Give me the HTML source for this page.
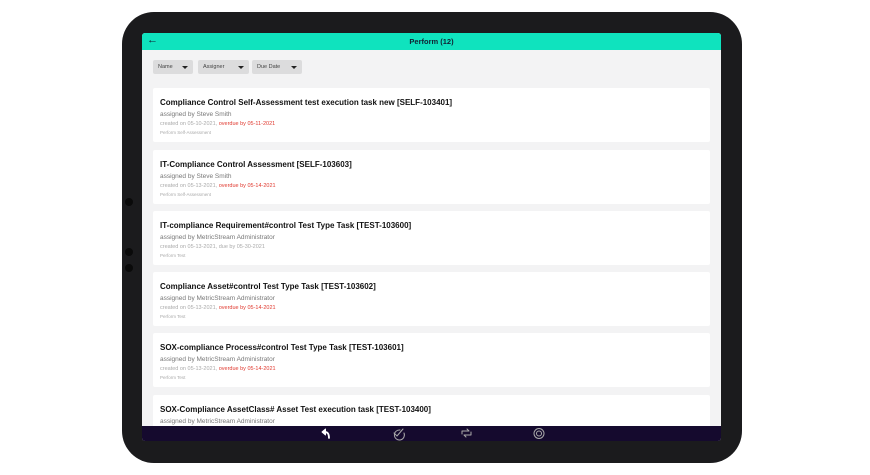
<!DOCTYPE html>
<html><head><style>
*{margin:0;padding:0;box-sizing:border-box}
body{width:870px;height:475px;background:#fff;position:relative;overflow:hidden;font-family:"Liberation Sans",sans-serif}
.dev{position:absolute;left:122px;top:12px;width:620px;height:451px;background:#1b1b1d;border-radius:32px}
.scr{position:absolute;left:142px;top:33px;width:579px;height:408px;background:#f3f3f4;overflow:hidden;border-radius:3px}
.hdr{height:17px;background:#0fe3be;text-align:center;font-size:7.5px;font-weight:bold;line-height:17px;color:#123}
.hdr .b{position:absolute;left:5px;top:-1px;font-size:11px;font-weight:bold}
.f{position:absolute;top:27px;height:14px;background:#dcdcdd;border-radius:2px;font-size:5.5px;line-height:14px;padding-left:5px;color:#444}
.f:after{content:"";position:absolute;right:5px;top:5.5px;border:3px solid transparent;border-top:3.5px solid #222}
.c{position:absolute;left:11px;width:557px;height:54px;background:#fff;border-radius:2px}
.t{position:absolute;left:7px;top:10px;font-size:8px;font-weight:bold;color:#111;white-space:nowrap}
.a{position:absolute;left:7px;top:23px;font-size:6.5px;color:#777}
.d{position:absolute;left:7px;top:33px;font-size:5.5px;color:#aaa}
.d span{color:#e0392f}
.p{position:absolute;left:7px;top:42px;font-size:4.5px;color:#aaa}
.bar{position:absolute;left:0;bottom:0;width:579px;height:15px;background:#150a2e}
.dot{position:absolute;left:125px;width:8px;height:8px;border-radius:50%;background:#0a0a0a}
</style></head><body>
<div class="dev"></div>
<div class="dot" style="top:198px"></div><div class="dot" style="top:248px"></div><div class="dot" style="top:264px"></div>
<div class="scr">
<div class="hdr"><span class="b">←</span>Perform (12)</div>
<div class="f" style="left:11px;width:40px">Name</div>
<div class="f" style="left:56px;width:51px">Assigner</div>
<div class="f" style="left:110px;width:50px">Due Date</div>
<div class="c" style="top:55px"><div class="t">Compliance Control Self-Assessment test execution task new [SELF-103401]</div><div class="a">assigned by Steve Smith</div><div class="d">created on 05-10-2021, <span>overdue by 05-11-2021</span></div><div class="p">Perform Self-Assessment</div></div>
<div class="c" style="top:117px"><div class="t">IT-Compliance Control Assessment [SELF-103603]</div><div class="a">assigned by Steve Smith</div><div class="d">created on 05-13-2021, <span>overdue by 05-14-2021</span></div><div class="p">Perform Self-Assessment</div></div>
<div class="c" style="top:178px"><div class="t">IT-compliance Requirement#control Test Type Task [TEST-103600]</div><div class="a">assigned by MetricStream Administrator</div><div class="d">created on 05-13-2021, due by 05-30-2021</div><div class="p">Perform Test</div></div>
<div class="c" style="top:239px"><div class="t">Compliance Asset#control Test Type Task [TEST-103602]</div><div class="a">assigned by MetricStream Administrator</div><div class="d">created on 05-13-2021, <span>overdue by 05-14-2021</span></div><div class="p">Perform Test</div></div>
<div class="c" style="top:300px"><div class="t">SOX-compliance Process#control Test Type Task [TEST-103601]</div><div class="a">assigned by MetricStream Administrator</div><div class="d">created on 05-13-2021, <span>overdue by 05-14-2021</span></div><div class="p">Perform Test</div></div>
<div class="c" style="top:362px"><div class="t">SOX-Compliance AssetClass# Asset Test execution task [TEST-103400]</div><div class="a">assigned by MetricStream Administrator</div></div>
<div class="bar">
<svg width="579" height="15" style="position:absolute;left:0;top:0" fill="none" stroke-linecap="round" stroke-linejoin="round">
<path d="M180 6 L183.5 3 L183.5 9 Z" fill="#fff" stroke="#fff" stroke-width="1"/><path d="M183 6 Q187 6 187 12" stroke="#fff" stroke-width="1.8"/>
<path d="M258 4 A5 5 0 1 0 262 7" stroke="#aaa" stroke-width="1"/><path d="M252 7 L255 10 L261 3" stroke="#aaa" stroke-width="1"/>
<path d="M320 5 h7 l-2 -2 M329 9 h-7 l2 2 M320 5 v3 M329 9 v-3" stroke="#aaa" stroke-width="1"/>
<circle cx="397" cy="7.5" r="5" stroke="#aaa" stroke-width="1"/><circle cx="397" cy="7.5" r="2.5" stroke="#aaa" stroke-width="1"/>
</svg>
</div>
</div>
</body></html>
